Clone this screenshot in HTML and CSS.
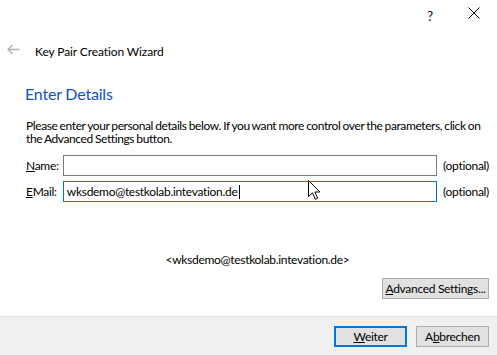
FILE: index.html
```html
<!DOCTYPE html>
<html>
<head>
<meta charset="utf-8">
<link rel="stylesheet" href="styles.css">
</head>
<body>
<div class="window">
  <div class="caption">
    <div class="cap-btn help">?</div>
    <div class="cap-btn close">
      <svg width="12" height="12" viewBox="0 0 12 12"><path d="M0.5 0.5 L11.5 11.5 M11.5 0.5 L0.5 11.5" stroke="#000" stroke-width="1" fill="none"/></svg>
    </div>
  </div>
  <div class="header">
    <svg class="back" width="13" height="11" viewBox="0 0 13 11"><path d="M1 5.5 H12.5 M5.5 1 L1 5.5 L5.5 10" stroke="#b4b4b4" stroke-width="1.4" fill="none"/></svg>
    <span class="title">Key Pair Creation Wizard</span>
  </div>
  <div class="content">
    <h1 class="heading">Enter Details</h1>
    <p class="intro">Please enter your personal details below. If you want more control over the parameters, click on the Advanced Settings button.</p>
    <div class="form">
      <div class="row">
        <span class="label"><u>N</u>ame:</span>
        <div class="input"></div>
        <span class="opt">(optional)</span>
      </div>
      <div class="row">
        <span class="label"><u>E</u>Mail:</span>
        <div class="input focus">wksdemo@testkolab.intevation.de<span class="caret"></span></div>
        <span class="opt">(optional)</span>
      </div>
    </div>
    <div class="result">&lt;wksdemo@testkolab.intevation.de&gt;</div>
    <div class="adv-row">
      <div class="btn"><u>A</u>dvanced Settings...</div>
    </div>
  </div>
  <div class="footer">
    <div class="btn default"><u>W</u>eiter</div>
    <div class="btn">A<u>b</u>brechen</div>
  </div>
  <svg class="pointer" width="13" height="21" viewBox="0 0 13 21"><path d="M0.5 0.5 V16.5 L4.5 12.8 L7.3 19.3 L9.6 18.3 L6.9 12 H11.8 Z" fill="#fff" stroke="#000" stroke-width="1" stroke-linejoin="miter"/></svg>
</div>
</body>
</html>
```
FILE: styles.css
```css
html, body {
  margin: 0;
  padding: 0;
  background: #fff;
}
.window {
  position: relative;
  width: 497px;
  height: 355px;
  display: flex;
  flex-direction: column;
  font-family: Lato, "Liberation Sans", sans-serif;
  font-size: 12px;
  letter-spacing: -0.3px;
  color: #000;
  overflow: hidden;
}
.caption {
  height: 30px;
  display: flex;
  justify-content: flex-end;
}
.cap-btn {
  width: 46px;
  height: 30px;
  display: flex;
  align-items: center;
  justify-content: center;
}
.help {
  font-size: 13px;
  padding-top: 1px;
  padding-left: 4px;
  box-sizing: border-box;
}
.close svg { display: block; margin-top: -4px; }
.header {
  margin-top: 14px;
  height: 16px;
  line-height: 16px;
  display: flex;
  align-items: center;
}
.back {
  margin-left: 7px;
  margin-right: 15px;
  margin-top: -6px;
}
.title {
  line-height: 16px;
  letter-spacing: -0.1px;
}
.content {
  padding: 0 8px 0 26px;
}
.heading {
  margin: 24px 0 0 -1px;
  font-size: 16px;
  font-weight: normal;
  line-height: 20px;
  letter-spacing: -0.2px;
  color: #0f4fc6;
}
.intro {
  margin: 15px 0 0 0;
  line-height: 13px;
  letter-spacing: -0.4px;
  word-spacing: -0.5px;
}
.form {
  margin-top: 10px;
  display: flex;
  flex-direction: column;
  gap: 5px;
}
.row {
  display: flex;
  align-items: center;
  height: 21px;
}
.label {
  width: 37px;
}
.input {
  box-sizing: border-box;
  width: 376px;
  height: 21px;
  border: 1px solid #7a7a7a;
  padding-left: 3px;
  line-height: 19px;
  display: flex;
  align-items: center;
}
.input.focus {
  border-color: #0078d7;
}
.caret {
  display: inline-block;
  width: 1px;
  height: 14px;
  margin-left: 1px;
  background: #000;
}
.opt {
  margin-left: 6px;
}
.result {
  margin-top: 50px;
  line-height: 16px;
  text-align: center;
}
.adv-row {
  margin-top: 10px;
  display: flex;
  justify-content: flex-end;
}
.btn {
  box-sizing: border-box;
  height: 21px;
  line-height: 19px;
  background: #e1e1e1;
  border: 1px solid #adadad;
  text-align: center;
  white-space: nowrap;
  padding: 0;
}
.adv-row .btn {
  width: 107px;
}
.footer {
  margin-top: auto;
  height: 39px;
  box-sizing: border-box;
  border-top: 1px solid #dfdfdf;
  background: #f0f0f0;
  display: flex;
  justify-content: flex-end;
  gap: 9px;
  padding: 9px 8px 0 0;
}
.footer .btn {
  width: 73px;
}
.footer .btn.default {
  border: 2px solid #0078d7;
  line-height: 17px;
}
.pointer {
  position: absolute;
  left: 308px;
  top: 180px;
}
```
